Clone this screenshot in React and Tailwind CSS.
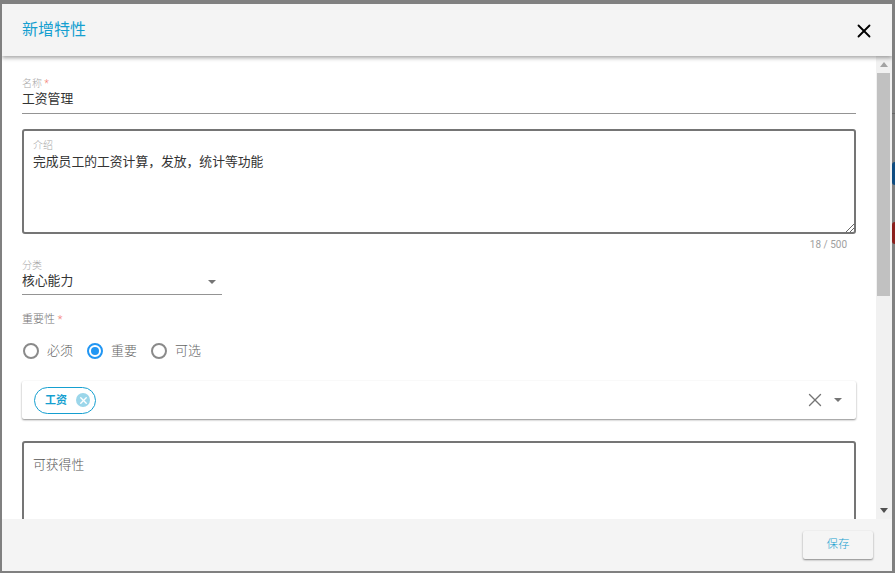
import { X } from 'lucide-react';

const cjk = { fontFamily: '"Roboto", "Noto Sans CJK SC", sans-serif' };

function Caret({ className }) {
  return <span className={`block w-0 h-0 border-x-4 border-x-transparent border-t-4 ${className}`} />;
}

function Radio({ label, checked }) {
  return (
    <label className="flex items-center h-6">
      <span className={`w-4 h-4 rounded-full border-2 flex items-center justify-center ${checked ? 'border-[#2196f3]' : 'border-[#8a8a8a]'}`}>
        {checked && <span className="w-2 h-2 rounded-full bg-[#2196f3]" />}
      </span>
      <span className="ml-2 mr-[14px] text-[13px] font-light text-[#666666]">{label}</span>
    </label>
  );
}

export default function App() {
  return (
    <div className="w-[895px] h-[573px] overflow-hidden bg-[#808080] pt-1 pl-0.5 relative" style={cjk}>
      {/* bits of the page behind the dialog */}
      <div className="absolute right-0 top-[113px] w-[3px] h-px bg-[#666666]" />
      <div className="absolute right-0 top-[162px] w-[3px] h-[23px] rounded-l-sm bg-[#0f4c81]" />
      <div className="absolute right-0 top-[222px] w-[3px] h-[22px] rounded-l-sm bg-[#8b1f1c]" />

      <div className="relative w-[890px] h-[567px] bg-white flex flex-col overflow-hidden">
        <header className="relative z-10 h-[52px] shrink-0 bg-[#f4f4f4] shadow-[0_2px_4px_rgba(0,0,0,0.35)] flex items-center justify-between pl-5 pr-[17px]">
          <h2 className="text-base text-[#159fd0] font-normal">新增特性</h2>
          <X size={22} strokeWidth={2} className="text-black translate-y-[1px]" />
        </header>

        <div className="flex-1 min-h-0 flex overflow-hidden">
          <div className="flex-1 min-w-0 pl-5 pr-5 pt-[21px]">
            <div className="border-b border-[#949494] h-[37px] pt-px">
              <div className="text-[10px] leading-[11px] font-light text-[#a8a8a8]">名称 <span className="text-[#f47c73]">*</span></div>
              <div className="text-[12.8px] leading-[20px] font-normal text-[#333333]">工资管理</div>
            </div>

            <div className="mt-[15px] h-[105px] rounded-[3px] border-2 border-[#757575] pl-[9px] pt-[9px] relative">
              <div className="text-[10px] leading-[12px] font-light text-[#a8a8a8]">介绍</div>
              <div className="text-[12.8px] leading-[19px] font-normal text-[#333333]">完成员工的工资计算，发放，统计等功能</div>
              <svg className="absolute right-0 bottom-0" width="9" height="9" viewBox="0 0 9 9">
                <path d="M1 9L9 1M5 9L9 5" stroke="#666666" strokeWidth="1" />
              </svg>
            </div>
            <div className="text-[10px] leading-[12px] text-[#a0a0a0] text-right pr-[9px] mt-[5px]">18 / 500</div>

            <div className="mt-[9px] w-[200px] h-[35px] border-b border-[#949494] relative">
              <div className="text-[10px] leading-[12px] font-light text-[#a8a8a8]">分类</div>
              <div className="text-[12.8px] leading-[18px] font-normal text-[#333333]">核心能力</div>
              <Caret className="absolute right-[6px] top-[20px] border-t-[#757575]" />
            </div>

            <div className="mt-[18px] text-[11px] leading-[14px] font-light text-[#757575]">重要性 <span className="text-[#f47c73]">*</span></div>

            <div className="mt-3 flex items-center pl-px">
              <Radio label="必须" />
              <Radio label="重要" checked />
              <Radio label="可选" />
            </div>

            <div className="mt-[18px] h-[38px] rounded-[2px] bg-white shadow-[0_1px_2px_rgba(0,0,0,0.45)] flex items-center pl-3 pr-[14px]">
              <span className="h-[27px] w-[62px] rounded-full border border-[#159fd0] flex items-center pl-[10px] pr-[5px] justify-between">
                <span className="text-[11px] font-bold text-[#159fd0] translate-y-[1px]">工资</span>
                <span className="w-[14px] h-[14px] rounded-full bg-[#9bd6ea] flex items-center justify-center">
                  <X size={11} strokeWidth={3} className="text-white" />
                </span>
              </span>
              <X size={22} strokeWidth={1.5} className="ml-auto mr-px text-[#757575]" />
              <Caret className="ml-[7px] border-t-[#757575]" />
            </div>

            <div className="mt-[22px] h-[120px] rounded-[3px] border-2 border-[#757575] pl-[9px] pt-3">
              <div className="text-[12.8px] leading-[20px] font-light text-[#555555]">可获得性</div>
            </div>
          </div>

          {/* scrollbar */}
          <div className="w-4 shrink-0 bg-[#f1f1f1] flex flex-col pl-px">
            <div className="h-[17px] w-[13px] flex items-center justify-center">
              <span className="block w-0 h-0 border-x-4 border-x-transparent border-b-[5px] border-b-[#a3a3a3]" />
            </div>
            <div className="w-[13px] h-[223px] bg-[#c1c1c1]" />
            <div className="flex-1" />
            <div className="h-[17px] w-[13px] flex items-center justify-center">
              <span className="block w-0 h-0 border-x-4 border-x-transparent border-t-[5px] border-t-[#505050]" />
            </div>
          </div>
        </div>

        <footer className="relative z-10 h-[52px] shrink-0 bg-[#f4f4f4] flex items-center justify-end pr-[19px]">
          <button className="w-[70px] h-[28px] rounded-[2px] bg-[#f5f5f5] shadow-[0_1px_2px_rgba(0,0,0,0.45)] text-[11.5px] font-light text-[#159fd0]">保存</button>
        </footer>
      </div>
    </div>
  );
}
